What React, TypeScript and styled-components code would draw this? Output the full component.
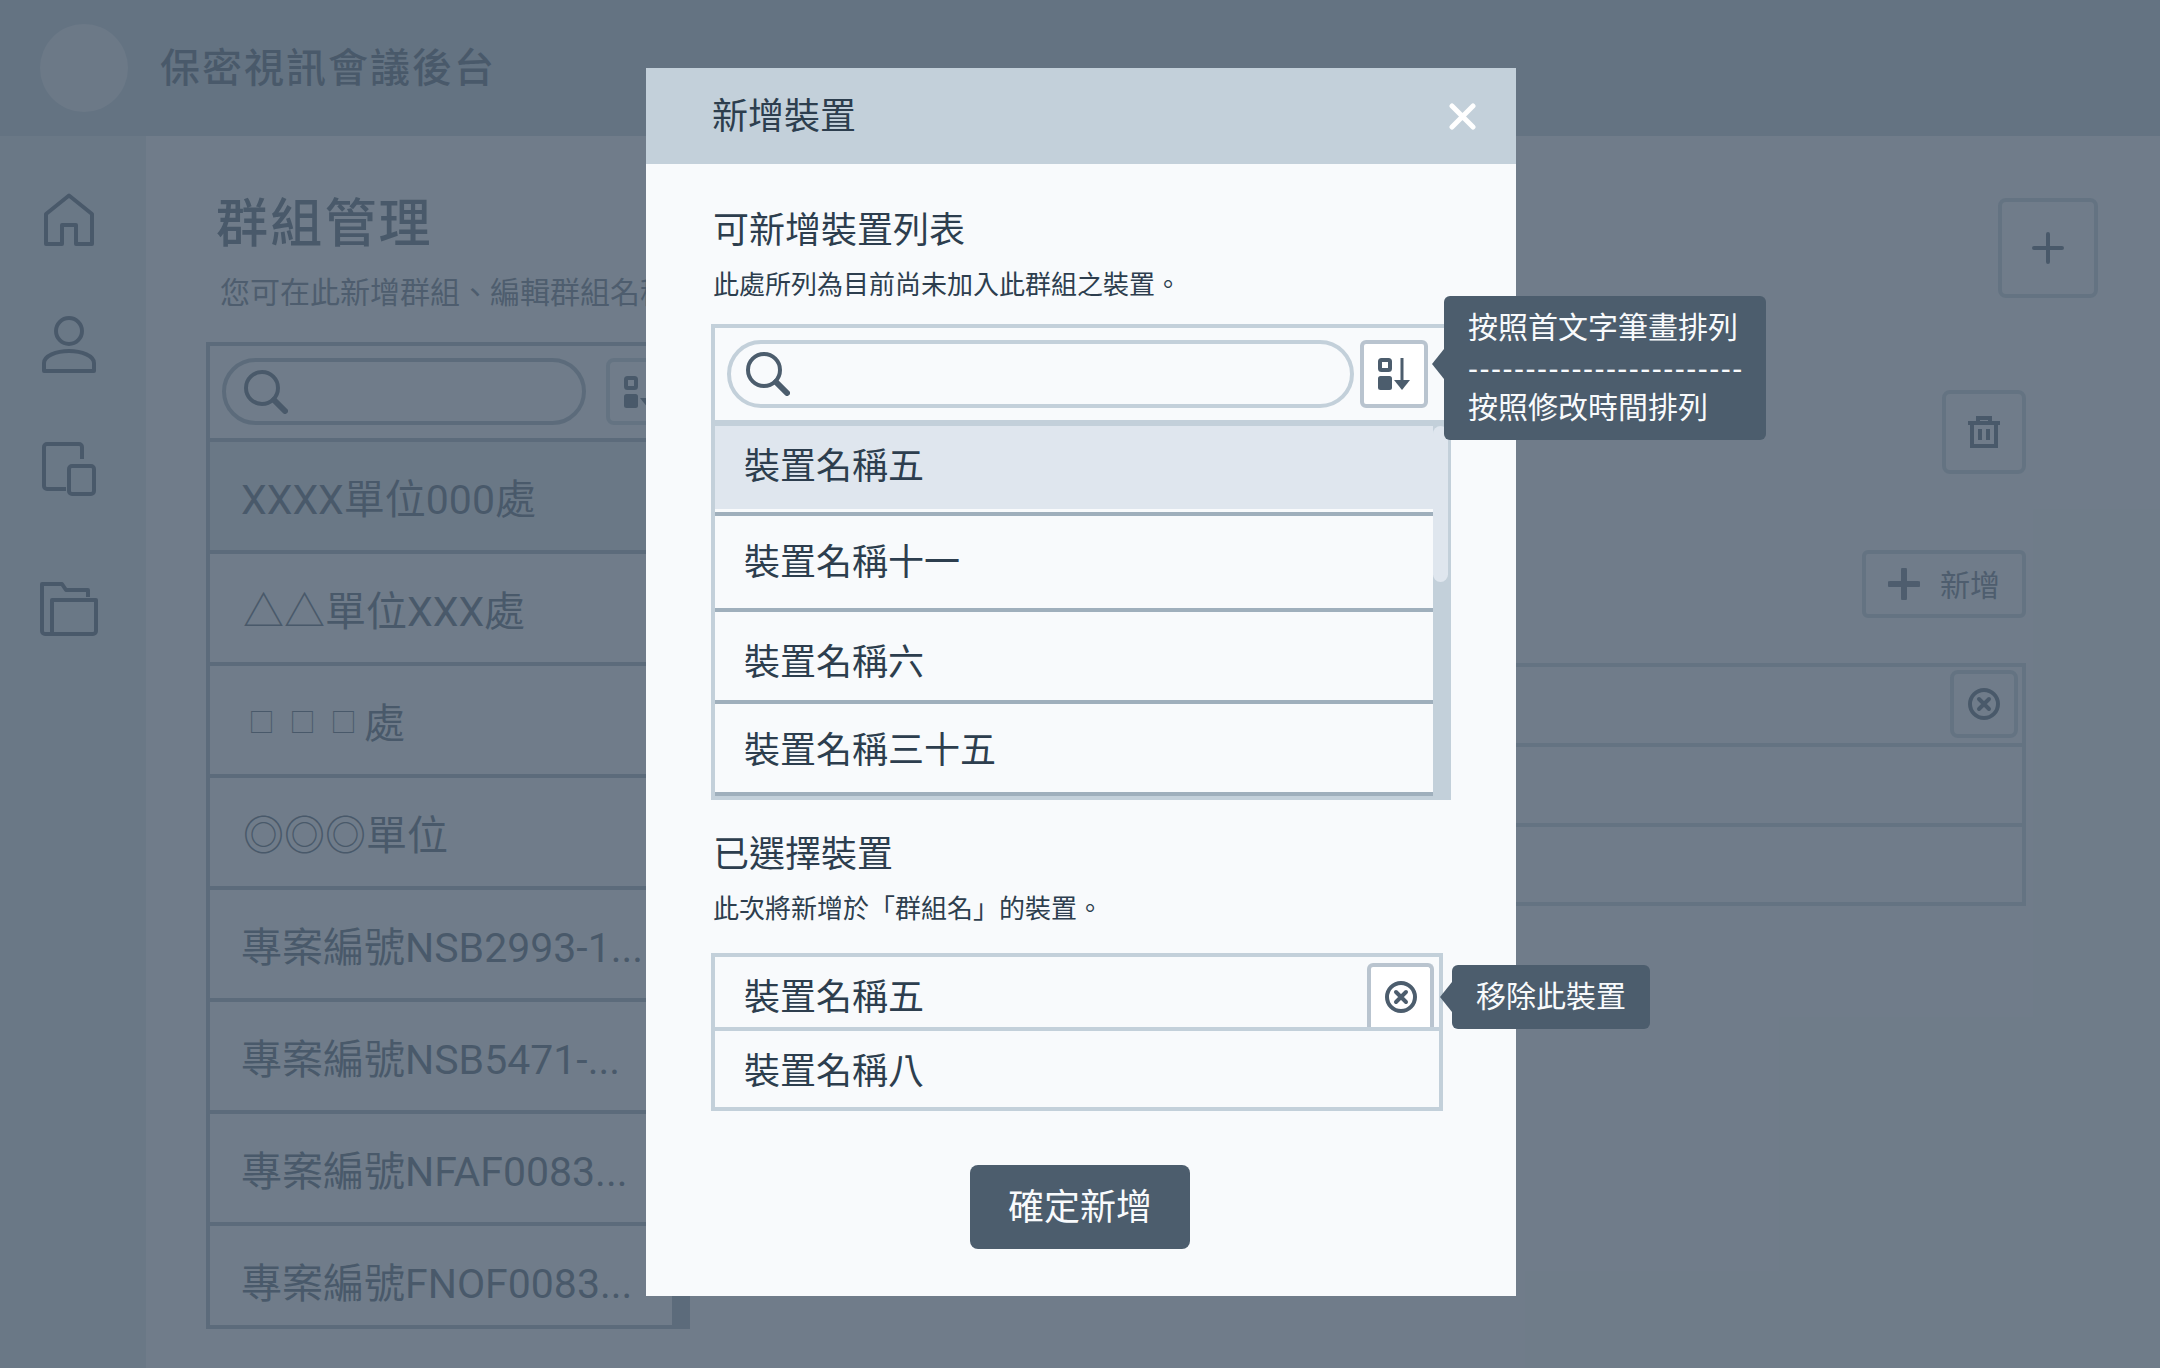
import React from 'react'
import styled, { createGlobalStyle } from 'styled-components'

const color = {
  ink: '#2d3e4e',
  dark: '#4c5d6d',
  muted: '#5f7080',
  line: '#9fafbc',
  edge: '#c3d0da',
  knob: '#b9c4cf',
  soft: '#dfe6ee',
  paper: '#f8fafc',
  white: '#ffffff',
}

const GlobalStyle = createGlobalStyle`
  html, body {
    margin: 0;
    padding: 0;
    height: 100%;
    overflow: hidden;
    background: ${color.paper};
  }
  * { box-sizing: border-box; }
  body {
    font-family: "Noto Sans CJK TC", "Noto Sans", sans-serif;
    color: ${color.dark};
  }
`

const Page = styled.div`
  position: relative;
  width: 2160px;
  height: 1368px;
  overflow: hidden;
`

const TopBar = styled.header`
  display: flex;
  align-items: center;
  gap: 32px;
  height: 136px;
  padding-left: 40px;
  background: ${color.edge};
`

const Avatar = styled.div`
  width: 88px;
  height: 88px;
  border-radius: 50%;
  background: #e6ebf0;
`

const AppName = styled.h1`
  margin: 0 0 6px;
  font-size: 40px;
  font-weight: 500;
  letter-spacing: 2px;
  line-height: 1;
`

const Shell = styled.div`
  display: flex;
  height: 1232px;
`

const SideNav = styled.nav`
  display: flex;
  flex-direction: column;
  align-items: center;
  flex: none;
  width: 146px;
  padding: 57px 8px 0 0;
  background: ${color.soft};
`

const NavItem = styled.div<{ $gap: number }>`
  display: flex;
  margin-top: ${p => p.$gap}px;
  color: ${color.dark};
`

const Content = styled.main`
  flex: 1;
  display: flex;
  flex-direction: column;
  padding: 0 62px 0 60px;
  min-width: 0;
`

const PageHead = styled.div`
  display: flex;
  justify-content: space-between;
  height: 206px;
`

const PageTitle = styled.h2`
  margin: 50px 0 16px 10px;
  font-size: 52px;
  font-weight: 500;
  letter-spacing: 2.2px;
  line-height: 68px;
`

const PageHint = styled.p`
  margin: 0 0 0 14px;
  font-size: 30px;
  line-height: 40px;
  color: ${color.muted};
  white-space: nowrap;
`

const IconButton = styled.button<{ $w: number; $h: number }>`
  display: flex;
  align-items: center;
  justify-content: center;
  flex: none;
  width: ${p => p.$w}px;
  height: ${p => p.$h}px;
  padding: 0;
  border: 4px solid ${color.edge};
  border-radius: 8px;
  background: transparent;
  color: ${color.dark};
`

const CornerButton = styled(IconButton)`
  margin-top: 62px;
`

const Columns = styled.div`
  display: flex;
  gap: 60px;
  flex: 1;
`

const GroupPanel = styled.section`
  flex: none;
  width: 484px;
  height: 987px;
  border: 4px solid ${color.line};
  display: flex;
  flex-direction: column;
  overflow: hidden;
`

const PanelSearch = styled.div`
  display: flex;
  gap: 20px;
  flex: none;
  height: 96px;
  padding: 12px 0 0 12px;
  border-bottom: 4px solid ${color.line};
`

const GroupSearchBox = styled.div`
  display: flex;
  align-items: center;
  width: 364px;
  height: 67px;
  padding-left: 18px;
  border: 4px solid ${color.line};
  border-radius: 34px;
`

const PanelBody = styled.div`
  display: flex;
  flex: 1;
  min-height: 0;
`

const GroupRows = styled.div`
  flex: 1;
  overflow: hidden;
`

const GroupRow = styled.div<{ $active?: boolean; $x: number }>`
  display: flex;
  align-items: center;
  height: 112px;
  padding-left: ${p => p.$x}px;
  border-bottom: 4px solid ${color.line};
  background: ${p => (p.$active ? color.soft : 'transparent')};
  font-family: Roboto, "Noto Sans CJK TC", sans-serif;
  font-size: 41px;
  white-space: nowrap;
`

const SmallMark = styled.span`
  width: 41px;
  font-size: 26px;
  text-align: center;
`

const PanelTrack = styled.div`
  flex: none;
  width: 14px;
  background: ${color.line};
`

const DetailColumn = styled.section`
  flex: 1;
  display: flex;
  flex-direction: column;
  align-items: flex-end;
  padding: 48px 72px 0 0;
`

const AddButton = styled.button`
  display: flex;
  align-items: center;
  gap: 20px;
  width: 164px;
  height: 68px;
  margin-top: 76px;
  padding: 0 0 0 22px;
  border: 4px solid ${color.edge};
  border-radius: 6px;
  background: transparent;
  font: inherit;
  font-size: 30px;
  color: ${color.muted};
`

const AddLabel = styled.span`
  margin-bottom: 3px;
`

const MemberList = styled.div`
  width: 100%;
  margin-top: 45px;
  border: 4px solid ${color.edge};
`

const MemberRow = styled.div<{ $last?: boolean }>`
  display: flex;
  justify-content: flex-end;
  height: ${p => (p.$last ? 75 : 80)}px;
  padding: 3px 4px 0 0;
  border-bottom: ${p => (p.$last ? 'none' : `4px solid ${color.edge}`)};
`

const Backdrop = styled.div`
  position: absolute;
  inset: 0;
  background: rgba(73, 89, 105, 0.78);
`

const Modal = styled.div`
  position: absolute;
  left: 646px;
  top: 68px;
  width: 870px;
  height: 1228px;
  background: ${color.paper};
  color: ${color.ink};
`

const ModalHead = styled.div`
  display: flex;
  align-items: center;
  justify-content: space-between;
  height: 96px;
  padding: 0 40px 0 66px;
  background: ${color.edge};
  font-size: 36px;
  line-height: 1;
`

const ModalTitle = styled.span`
  margin-bottom: 6px;
`

const ModalBody = styled.div`
  display: flex;
  flex-direction: column;
  padding: 39px 65px 0;
`

const SectionTitle = styled.h3<{ $gap?: number }>`
  margin: ${p => p.$gap ?? 0}px 0 14px 2px;
  font-size: 36px;
  font-weight: 400;
  line-height: 48px;
`

const SectionHint = styled.p<{ $gap: number }>`
  margin: 0 0 ${p => p.$gap}px 2px;
  font-size: 26px;
  line-height: 36px;
`

const PickerBox = styled.div`
  position: relative;
  width: 740px;
  height: 476px;
  border: solid ${color.edge};
  border-width: 4px 3px 4px 4px;
  display: flex;
  flex-direction: column;
`

const SearchRow = styled.div`
  display: flex;
  gap: 6px;
  flex: none;
  height: 98px;
  padding: 12px 0 0 12px;
  border-bottom: 6px solid ${color.edge};
`

const SearchBox = styled.div`
  display: flex;
  align-items: center;
  width: 627px;
  height: 68px;
  padding-left: 15px;
  border: 4px solid ${color.edge};
  border-radius: 34px;
`

const SortButton = styled.button`
  position: relative;
  display: flex;
  align-items: center;
  justify-content: center;
  flex: none;
  width: 68px;
  height: 68px;
  padding: 0;
  border: 4px solid ${color.knob};
  border-radius: 6px;
  background: ${color.white};
  color: ${color.dark};
`

const PickerBody = styled.div`
  display: flex;
  flex: 1;
  min-height: 0;
`

const PickerRows = styled.div`
  flex: 1;
`

const PickerRow = styled.div<{ $h: number; $nudge: number; $selected?: boolean }>`
  display: flex;
  align-items: center;
  height: ${p => p.$h}px;
  padding: ${p => Math.max(p.$nudge, 0)}px 0 ${p => Math.max(-p.$nudge, 0)}px 29px;
  border-bottom: 4px solid ${color.line};
  background: ${p => (p.$selected ? color.soft : 'transparent')};
  box-shadow: ${p => (p.$selected ? `inset 0 -3px 0 ${color.paper}` : 'none')};
  font-size: 36px;
  line-height: 1;
`

const Track = styled.div`
  flex: none;
  width: 15px;
  background: ${color.edge};
`

const Thumb = styled.div`
  height: 156px;
  border-radius: 8px;
  background: ${color.soft};
`

const ChosenBox = styled.div`
  width: 732px;
  border: 4px solid ${color.edge};
`

const ChosenRow = styled.div<{ $h: number; $nudge: number; $last?: boolean }>`
  position: relative;
  display: flex;
  align-items: center;
  justify-content: space-between;
  height: ${p => p.$h}px;
  padding: ${p => Math.max(p.$nudge, 0)}px 0 ${p => Math.max(-p.$nudge, 0)}px 29px;
  border-bottom: ${p => (p.$last ? 'none' : `4px solid ${color.edge}`)};
  font-size: 36px;
  line-height: 1;
`

const RemoveButton = styled.button`
  position: relative;
  display: flex;
  align-items: center;
  justify-content: center;
  align-self: flex-end;
  width: 67px;
  height: 64px;
  margin-right: 5px;
  padding: 0;
  border: 4px solid ${color.knob};
  border-bottom: none;
  border-radius: 6px 6px 0 0;
  background: ${color.white};
  color: ${color.dark};
`

const Confirm = styled.button`
  width: 220px;
  height: 84px;
  margin: 54px 0 0 259px;
  padding: 0 0 6px;
  border: none;
  border-radius: 8px;
  background: ${color.dark};
  color: ${color.paper};
  font: inherit;
  font-size: 36px;
  line-height: 1;
`

const Tip = styled.div<{ $arrow: number }>`
  position: absolute;
  padding: 0 24px;
  border-radius: 6px;
  background: ${color.dark};
  color: ${color.paper};
  font-size: 30px;
  text-align: left;
  white-space: nowrap;
  &::before {
    content: '';
    position: absolute;
    left: -12px;
    top: ${p => p.$arrow}px;
    margin-top: -15px;
    border-style: solid;
    border-width: 15px 12px 15px 0;
    border-color: transparent ${color.dark} transparent transparent;
  }
`

const SortTip = styled(Tip)`
  left: 80px;
  top: -48px;
  width: 322px;
  height: 144px;
  padding-top: 12px;
  line-height: 40px;
`

const DashLine = styled.div`
  margin: 1px 0 -1px;
  letter-spacing: 1.5px;
`

const RemoveTip = styled(Tip)`
  left: 81px;
  top: -2px;
  width: 198px;
  height: 64px;
  line-height: 64px;
`

// icons

const stroke = {
  fill: 'none',
  stroke: 'currentColor',
  strokeWidth: 4,
}

const HomeIcon = () => (
  <svg width="50" height="53" viewBox="0 0 50 53" {...stroke}>
    <path d="M2 51V21L25 2.5 48 21v30H32V32H18v19z" strokeLinejoin="round" />
  </svg>
)

const UserIcon = () => (
  <svg width="54" height="57" viewBox="0 0 54 57" {...stroke}>
    <circle cx="27" cy="15" r="13" />
    <path d="M2 55V47c0-7 12-12 25-12s25 5 25 12v8z" strokeLinejoin="round" />
  </svg>
)

const DevicesIcon = () => (
  <svg width="54" height="54" viewBox="0 0 54 54" {...stroke}>
    <path d="M40 17V5a3 3 0 0 0-3-3H5a3 3 0 0 0-3 3v39a3 3 0 0 0 3 3h19" />
    <rect x="27" y="24" width="25" height="28" rx="3" />
  </svg>
)

const FolderIcon = () => (
  <svg width="58" height="54" viewBox="0 0 58 54" {...stroke}>
    <path d="M48 15V8H26l-4-6H2v47a3 3 0 0 0 3 3h48a3 3 0 0 0 3-3V18H12v34" strokeLinejoin="round" />
  </svg>
)

const SearchIcon = ({ size = 44 }: { size?: number }) => (
  <svg width={size} height={size} viewBox="0 0 44 44" fill="none" stroke={color.dark}>
    <circle cx="18" cy="18" r="16" strokeWidth="4" />
    <path d="M30 30l11 11" strokeWidth="6" strokeLinecap="round" />
  </svg>
)

const SortIcon = () => (
  <svg width="32" height="32" viewBox="0 0 32 32" fill="currentColor">
    <rect x="2" y="2" width="10" height="10" rx="1.5" fill="none" stroke="currentColor" strokeWidth="4" />
    <rect y="18" width="14" height="14" rx="2.5" />
    <rect x="22.5" y="0" width="3" height="24" />
    <path d="M16 22h16l-8 10z" />
  </svg>
)

const CloseIcon = () => (
  <svg width="27" height="27" viewBox="0 0 27 27" fill="none" stroke={color.white} strokeWidth="5" strokeLinecap="round">
    <path d="M3 3l21 21M24 3L3 24" />
  </svg>
)

const ClearIcon = () => (
  <svg width="32" height="32" viewBox="0 0 32 32" fill="none" stroke="currentColor" strokeWidth="4">
    <circle cx="16" cy="16" r="14" />
    <path d="M11 11l10 10M21 11L11 21" strokeLinecap="round" />
  </svg>
)

const PlusIcon = ({ weight = 4 }: { weight?: number }) => (
  <svg width="32" height="32" viewBox="0 0 32 32" fill="none" stroke="currentColor" strokeWidth={weight} strokeLinecap="round">
    <path d="M16 2v28M2 16h28" />
  </svg>
)

const TrashIcon = () => (
  <svg width="32" height="32" viewBox="0 0 32 32" fill="none" stroke="currentColor" strokeWidth="4">
    <path d="M0 7h32M10 7V2h12v5M4 7v23h24V7M12 13v11M20 13v11" />
  </svg>
)

const groups = [
  { name: 'XXXX單位000處', x: 31, active: true },
  { name: '△△單位XXX處', x: 33 },
  { name: '處', x: 31, marks: ['□', '□', '□'] },
  { name: '◎◎◎單位', x: 33 },
  { name: '專案編號NSB2993-1...', x: 31 },
  { name: '專案編號NSB5471-...', x: 31 },
  { name: '專案編號NFAF0083...', x: 31 },
  { name: '專案編號FNOF0083...', x: 31 },
]

const available = [
  { name: '裝置名稱五', h: 90, nudge: -12, selected: true },
  { name: '裝置名稱十一', h: 96, nudge: -6 },
  { name: '裝置名稱六', h: 92, nudge: 6 },
  { name: '裝置名稱三十五', h: 92, nudge: -2 },
]

export default function App() {
  return (
    <Page lang="zh-TW">
      <GlobalStyle />
      <TopBar>
        <Avatar />
        <AppName>保密視訊會議後台</AppName>
      </TopBar>
      <Shell>
        <SideNav>
          <NavItem $gap={0}><HomeIcon /></NavItem>
          <NavItem $gap={70}><UserIcon /></NavItem>
          <NavItem $gap={69}><DevicesIcon /></NavItem>
          <NavItem $gap={86}><FolderIcon /></NavItem>
        </SideNav>
        <Content>
          <PageHead>
            <div>
              <PageTitle>群組管理</PageTitle>
              <PageHint>您可在此新增群組、編輯群組名稱</PageHint>
            </div>
            <CornerButton $w={100} $h={100}><PlusIcon /></CornerButton>
          </PageHead>
          <Columns>
            <GroupPanel>
              <PanelSearch>
                <GroupSearchBox><SearchIcon /></GroupSearchBox>
                <IconButton $w={68} $h={67}><SortIcon /></IconButton>
              </PanelSearch>
              <PanelBody>
                <GroupRows>
                  {groups.map(g => (
                    <GroupRow key={g.name} $active={g.active} $x={g.x}>
                      {g.marks?.map((m, i) => <SmallMark key={i}>{m}</SmallMark>)}
                      {g.name}
                    </GroupRow>
                  ))}
                </GroupRows>
                <PanelTrack />
              </PanelBody>
            </GroupPanel>
            <DetailColumn>
              <IconButton $w={84} $h={84}><TrashIcon /></IconButton>
              <AddButton><PlusIcon weight={6} /><AddLabel>新增</AddLabel></AddButton>
              <MemberList>
                <MemberRow><IconButton $w={68} $h={68}><ClearIcon /></IconButton></MemberRow>
                <MemberRow />
                <MemberRow $last />
              </MemberList>
            </DetailColumn>
          </Columns>
        </Content>
      </Shell>
      <Backdrop />
      <Modal>
        <ModalHead>
          <ModalTitle>新增裝置</ModalTitle>
          <CloseIcon />
        </ModalHead>
        <ModalBody>
          <SectionTitle>可新增裝置列表</SectionTitle>
          <SectionHint $gap={23}>此處所列為目前尚未加入此群組之裝置。</SectionHint>
          <PickerBox>
            <SearchRow>
              <SearchBox><SearchIcon /></SearchBox>
              <SortButton>
                <SortIcon />
                <SortTip $arrow={68}>
                  <div>按照首文字筆畫排列</div>
                  <DashLine>------------------------</DashLine>
                  <div>按照修改時間排列</div>
                </SortTip>
              </SortButton>
            </SearchRow>
            <PickerBody>
              <PickerRows>
                {available.map(d => (
                  <PickerRow key={d.name} $h={d.h} $nudge={d.nudge} $selected={d.selected}>{d.name}</PickerRow>
                ))}
              </PickerRows>
              <Track><Thumb /></Track>
            </PickerBody>
          </PickerBox>
          <SectionTitle $gap={27}>已選擇裝置</SectionTitle>
          <SectionHint $gap={28}>此次將新增於「群組名」的裝置。</SectionHint>
          <ChosenBox>
            <ChosenRow $h={74} $nudge={4}>
              裝置名稱五
              <RemoveButton>
                <ClearIcon />
                <RemoveTip $arrow={32}>移除此裝置</RemoveTip>
              </RemoveButton>
            </ChosenRow>
            <ChosenRow $h={76} $nudge={-2} $last>裝置名稱八</ChosenRow>
          </ChosenBox>
          <Confirm>確定新增</Confirm>
        </ModalBody>
      </Modal>
    </Page>
  )
}
